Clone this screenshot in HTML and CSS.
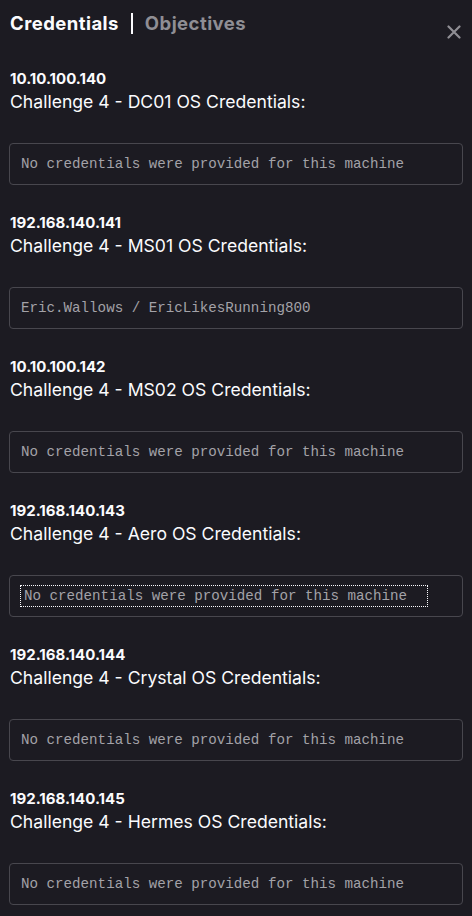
FILE: index.html
```html
<!DOCTYPE html>
<html>
<head>
<meta charset="utf-8">
<link rel="stylesheet" href="styles.css">
</head>
<body>
<div class="panel">
  <header class="head">
    <div class="tabs">
      <span class="tab active">Credentials</span>
      <span class="sep"></span>
      <span class="tab">Objectives</span>
    </div>
    <button class="close" aria-label="Close">
      <svg width="14" height="14" viewBox="0 0 14 14"><path d="M1.5 1.5 L12.5 12.5 M12.5 1.5 L1.5 12.5" stroke="#8f8e94" stroke-width="2.2" stroke-linecap="round"/></svg>
    </button>
  </header>

  <section class="machine">
    <div class="ip">10.10.100.140</div>
    <div class="title">Challenge 4 - DC01 OS Credentials:</div>
    <div class="cred"><span>No credentials were provided for this machine</span></div>
  </section>
  <section class="machine">
    <div class="ip">192.168.140.141</div>
    <div class="title">Challenge 4 - MS01 OS Credentials:</div>
    <div class="cred"><span>Eric.Wallows / EricLikesRunning800</span></div>
  </section>
  <section class="machine">
    <div class="ip">10.10.100.142</div>
    <div class="title">Challenge 4 - MS02 OS Credentials:</div>
    <div class="cred"><span>No credentials were provided for this machine</span></div>
  </section>
  <section class="machine">
    <div class="ip">192.168.140.143</div>
    <div class="title">Challenge 4 - Aero OS Credentials:</div>
    <div class="cred"><span class="focused">No credentials were provided for this machine</span></div>
  </section>
  <section class="machine">
    <div class="ip">192.168.140.144</div>
    <div class="title">Challenge 4 - Crystal OS Credentials:</div>
    <div class="cred"><span>No credentials were provided for this machine</span></div>
  </section>
  <section class="machine">
    <div class="ip">192.168.140.145</div>
    <div class="title">Challenge 4 - Hermes OS Credentials:</div>
    <div class="cred"><span>No credentials were provided for this machine</span></div>
  </section>
</div>
</body>
</html>
```

FILE: styles.css
```css
html, body {
  margin: 0;
  padding: 0;
  background: #1c1b22;
  height: 100%;
  overflow: hidden;
}
body {
  font-family: Inter, "Noto Sans", sans-serif;
  color: #fbfbfe;
}
.panel {
  padding: 10px 9px 0 9px;
}
.head {
  display: flex;
  justify-content: space-between;
  align-items: flex-start;
  height: 58px;
}
.tabs {
  display: flex;
  align-items: center;
  gap: 12px;
  padding-left: 1px;
}
.tab {
  font-size: 18.5px;
  font-weight: 700;
  line-height: 26px;
  letter-spacing: 0.45px;
  color: #8f8e94;
}
.tab.active {
  color: #fbfbfe;
}
.sep {
  width: 2px;
  height: 21px;
  background: #fbfbfe;
}
.close {
  background: none;
  border: 0;
  padding: 0;
  margin: 15px 2px 0 0;
  width: 14px;
  height: 14px;
  display: flex;
}
.machine {
  display: flex;
  flex-direction: column;
  height: 144px;
}
.ip {
  font-size: 15px;
  font-weight: 700;
  line-height: 22px;
  padding-left: 1px;
}
.title {
  font-size: 17.6px;
  font-weight: 400;
  line-height: 24px;
  padding-left: 1px;
}
.cred {
  margin-top: 29px;
  height: 42px;
  box-sizing: border-box;
  border: 1px solid #48474e;
  border-radius: 4px;
  display: flex;
  align-items: center;
  padding-left: 11px;
  font-family: "Liberation Mono", monospace;
  font-size: 14.2px;
  color: #a3a2a8;
}
.focused {
  outline: 1px dotted #fbfbfe;
  padding: 2px 20px 2px 3px;
}
```
